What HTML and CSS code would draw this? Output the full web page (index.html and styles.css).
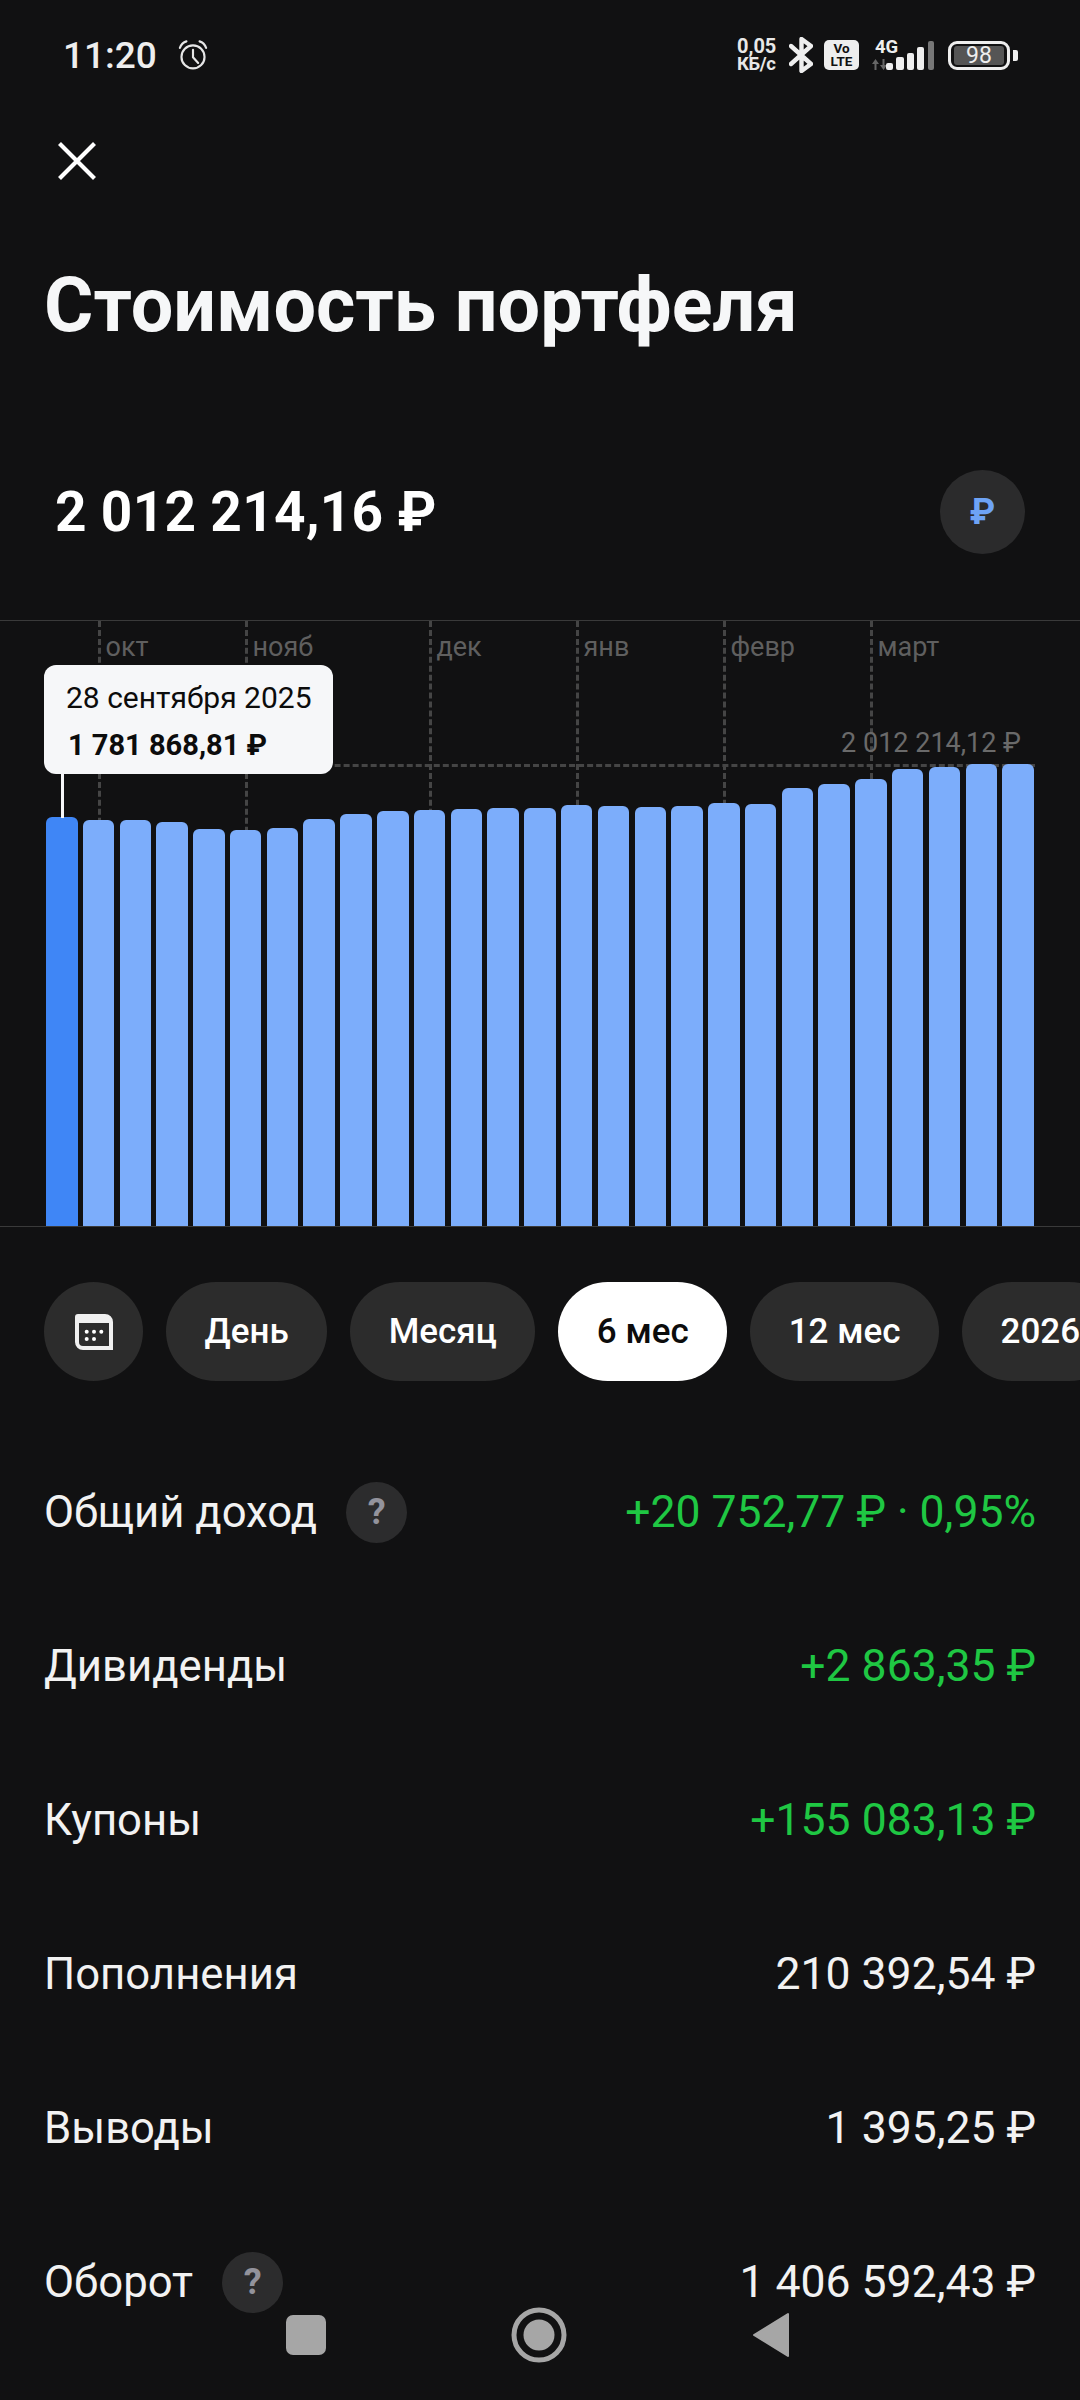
FILE: index.html
```html
<!DOCTYPE html>
<html lang="ru">
<head>
<meta charset="utf-8">
<title>Стоимость портфеля</title>
<link rel="stylesheet" href="styles.css">
</head>
<body>
<div class="page">
  <header class="status">
    <div class="status-left">
      <span class="time">11:20</span>
      <svg class="alarm" viewBox="0 0 32 32" fill="none" stroke="#e6e6e6" stroke-width="2.3" stroke-linecap="round" stroke-linejoin="round"><circle cx="16" cy="18" r="12.3"/><path d="M16 10.5v8l5.5 6M2 8.5Q4 3 9 1.5M30 8.5Q28 3 23 1.5"/></svg>
    </div>
    <div class="status-right">
      <div class="speed"><span>0,05</span><span class="speed-unit">КБ/с</span></div>
      <svg class="bt" viewBox="0 0 24 36" fill="none" stroke="#eee" stroke-width="4.4" stroke-linejoin="round" stroke-linecap="round"><path d="M2 9l20 18-9.5 7V2L22 9 2 27"/></svg>
      <div class="volte"><span>Vo</span><span>LTE</span></div>
      <div class="net">
        <span class="net-g">4G</span>
        <svg class="net-arrows" viewBox="0 0 15 11" fill="#666"><path d="M0 5l3.5-5L7 5H4.5v6h-2V5zM8 6h2.5V0h2v6H15l-3.500 5z"/></svg>
      </div>
      <svg class="signal" viewBox="0 0 48 29" fill="#eee"><rect x="0" y="22" width="7" height="7" rx="2"/><rect x="10" y="16" width="8" height="13" rx="2"/><rect x="21" y="12" width="7" height="17" rx="2"/><rect x="31" y="6" width="7" height="23" rx="2"/><rect x="42" y="0" width="6" height="29" rx="2" fill="#777"/></svg>
      <div class="battery"><div class="battery-body"><span>98</span></div><div class="battery-nub"></div></div>
    </div>
  </header>

  <button class="close" aria-label="Закрыть">
    <svg viewBox="0 0 38 38" stroke="#fff" stroke-width="4.2"><path d="M1.500 1.500l35 35M36.500 1.500l-35 35"/></svg>
  </button>

  <h1 class="title">Стоимость портфеля</h1>

  <section class="total">
    <span class="total-value">2 012 214,16 ₽</span>
    <span class="currency">₽</span>
  </section>

  <section class="chart">
    <div class="grid-v" style="left:99px"><span>окт</span></div>
    <div class="grid-v" style="left:246px"><span>нояб</span></div>
    <div class="grid-v" style="left:430px"><span>дек</span></div>
    <div class="grid-v" style="left:577px"><span>янв</span></div>
    <div class="grid-v" style="left:724px"><span>февр</span></div>
    <div class="grid-v" style="left:871px"><span>март</span></div>
    <div class="grid-h"></div>
    <div class="max-label">2 012 214,12 ₽</div>
    <div class="bars">
      <div class="bar bar-active" style="height:409px"></div>
      <div class="bar" style="height:406px"></div>
      <div class="bar" style="height:406px"></div>
      <div class="bar" style="height:404px"></div>
      <div class="bar" style="height:397px"></div>
      <div class="bar" style="height:396px"></div>
      <div class="bar" style="height:398px"></div>
      <div class="bar" style="height:407px"></div>
      <div class="bar" style="height:412px"></div>
      <div class="bar" style="height:415px"></div>
      <div class="bar" style="height:416px"></div>
      <div class="bar" style="height:417px"></div>
      <div class="bar" style="height:418px"></div>
      <div class="bar" style="height:418px"></div>
      <div class="bar" style="height:421px"></div>
      <div class="bar" style="height:420px"></div>
      <div class="bar" style="height:419px"></div>
      <div class="bar" style="height:420px"></div>
      <div class="bar" style="height:423px"></div>
      <div class="bar" style="height:422px"></div>
      <div class="bar" style="height:438px"></div>
      <div class="bar" style="height:442px"></div>
      <div class="bar" style="height:447px"></div>
      <div class="bar" style="height:457px"></div>
      <div class="bar" style="height:459px"></div>
      <div class="bar" style="height:462px"></div>
      <div class="bar" style="height:462px"></div>
    </div>
    <div class="tooltip">
      <div class="tooltip-date">28 сентября 2025</div>
      <div class="tooltip-value">1 781 868,81 ₽</div>
    </div>
    <div class="tooltip-stem"></div>
  </section>

  <nav class="chips">
    <div class="chip chip-icon">
      <svg viewBox="0 0 38 36"><path fill-rule="evenodd" d="M3 0h27a8 8 0 0 1 8 8v28H8a8 8 0 0 1-8-8V3a3 3 0 0 1 3-3zM4 9v19a4 4 0 0 0 4 4h26V9z" fill="#f0f0f0"/><g fill="#fff"><circle cx="11.700" cy="17.700" r="2"/><circle cx="19" cy="17.700" r="2"/><circle cx="26.300" cy="17.700" r="2"/><circle cx="11.700" cy="25" r="2"/><circle cx="19" cy="25" r="2"/></g></svg>
    </div>
    <div class="chip">День</div>
    <div class="chip">Месяц</div>
    <div class="chip chip-on">6 мес</div>
    <div class="chip">12 мес</div>
    <div class="chip">2026</div>
  </nav>

  <section class="rows">
    <div class="row"><div class="row-label">Общий доход<span class="help">?</span></div><div class="row-value up">+20 752,77 ₽ · 0,95%</div></div>
    <div class="row"><div class="row-label">Дивиденды</div><div class="row-value up">+2 863,35 ₽</div></div>
    <div class="row"><div class="row-label">Купоны</div><div class="row-value up">+155 083,13 ₽</div></div>
    <div class="row"><div class="row-label">Пополнения</div><div class="row-value">210 392,54 ₽</div></div>
    <div class="row"><div class="row-label">Выводы</div><div class="row-value">1 395,25 ₽</div></div>
    <div class="row"><div class="row-label">Оборот<span class="help">?</span></div><div class="row-value">1 406 592,43 ₽</div></div>
  </section>

  <div class="navbar">
    <div class="nav-square"></div>
    <svg class="nav-circle" viewBox="0 0 56 56"><circle cx="28" cy="28" r="25" fill="none" stroke="#a6a6a6" stroke-width="5"/><circle cx="28" cy="28" r="15.500" fill="#a6a6a6"/></svg>
    <svg class="nav-back" viewBox="0 0 38 46"><path d="M36 2v42L2 23z" fill="#a6a6a6" stroke="#a6a6a6" stroke-width="2" stroke-linejoin="round"/></svg>
  </div>
</div>
</body>
</html>
```
FILE: styles.css
```css
* { box-sizing: border-box; }
html, body { margin: 0; padding: 0; background: #111112; }
body { font-family: Roboto, "Noto Sans", sans-serif; color: #fff; }
.page { position: relative; width: 1080px; height: 2400px; overflow: hidden; background: #111112; }

.status { height: 110px; padding: 0 62px 0 63px; display: flex; justify-content: space-between; align-items: center; }
.status-left { display: flex; align-items: center; gap: 21px; }
.time { font-size: 37px; line-height: 1; font-weight: 500; color: #eee; }
.alarm { width: 30px; height: 30px; }
.status-right { display: flex; align-items: center; height: 36px; }
.speed { display: flex; flex-direction: column; width: 42px; font-size: 20px; line-height: 18px; font-weight: 700; color: #e8e8e8; white-space: nowrap; }
.speed-unit { font-size: 18.5px; letter-spacing: -.4px; }
.bt { width: 24px; height: 36px; margin-left: 10px; }
.volte { width: 35px; height: 30px; margin-left: 11px; border-radius: 5px; background: #eee; color: #111; display: flex; flex-direction: column; align-items: center; font-size: 13.5px; line-height: 13px; font-weight: 700; padding-top: 2px; }
.net { width: 28px; margin-left: 12px; display: flex; flex-direction: column; gap: 5px; }
.net-g { margin-left: 4px; font-size: 18.5px; line-height: 14px; font-weight: 700; color: #eee; }
.net-arrows { width: 15px; height: 11px; margin-left: 1px; }
.signal { width: 48px; height: 29px; margin-left: -13px; }
.battery { display: flex; align-items: center; margin-left: 14px; }
.battery-body { width: 62px; height: 29px; border: 3px solid #eee; border-radius: 9px; padding: 2px 3px; display: flex; }
.battery-body span { flex: 1; background: #555; border-radius: 3px; font-size: 23px; line-height: 19px; text-align: center; color: #eee; }
.battery-nub { width: 5px; height: 11px; margin-left: 3px; background: #eee; border-radius: 0 2px 2px 0; }

.close { display: block; width: 38px; height: 38px; margin: 32px 0 0 58px; padding: 0; border: 0; background: none; }
.close svg { display: block; width: 38px; height: 38px; }

.title { margin: 80px 0 0 44px; font-size: 75.5px; line-height: 90px; font-weight: 700; color: #f6f7f8; }

.total { margin-top: 120px; padding: 0 55px; display: flex; justify-content: space-between; align-items: center; height: 84px; }
.total-value { font-size: 55px; line-height: 60px; font-weight: 700; letter-spacing: .3px; }
.currency { width: 85px; height: 84px; border-radius: 50%; background: #2b2b2c; color: #6ea3f5; font-size: 36px; font-weight: 700; display: flex; align-items: center; justify-content: center; }

.chart { position: relative; height: 607px; margin-top: 66px; border-top: 1px solid #3a3a3a; border-bottom: 1px solid #3a3a3a; }
.grid-v { position: absolute; top: 0; bottom: 0; width: 0; margin-left: -1.5px; border-left: 3px dashed #454545; }
.grid-v span { position: absolute; left: 5px; top: 8px; font-size: 27px; line-height: 36px; color: #5f5f5f; }
.grid-h { position: absolute; left: 46px; right: 45px; top: 143px; border-top: 3px dashed #454545; }
.max-label { position: absolute; right: 59px; top: 104px; font-size: 27px; line-height: 36px; color: #6a6a6a; }
.bars { position: absolute; left: 46px; right: 46px; bottom: 0; display: flex; justify-content: space-between; align-items: flex-end; }
.bar { width: 31.5px; border-radius: 6px 6px 0 0; background: #7cadfb; }
.bar-active { background: #3f86f6; }
.tooltip { position: absolute; left: 44px; top: 44px; width: 289px; height: 109px; border-radius: 12px; background: #f6f7f9; color: #0c0c0c; padding: 14px 22px 0; }
.tooltip-date { font-size: 30px; line-height: 38px; white-space: nowrap; }
.tooltip-value { font-size: 29px; line-height: 38px; margin: 9px 0 0 2px; font-weight: 700; white-space: nowrap; }
.tooltip-stem { position: absolute; left: 61px; top: 153px; width: 3px; height: 44px; background: #f6f7f9; }

.chips { display: flex; gap: 23px; padding-left: 44px; margin-top: 55px; width: 1200px; }
.chip { height: 99px; flex: none; padding: 0 38.5px; border-radius: 50px; background: #2c2c2c; font-size: 35px; font-weight: 500; display: flex; align-items: center; }
.chip-icon { width: 99px; padding: 0; justify-content: center; }
.chip-icon svg { width: 38px; height: 36px; }
.chip-on { background: #fff; color: #0c0c0c; }

.rows { margin-top: 54px; padding: 0 44px; display: flex; flex-direction: column; }
.row { height: 154px; display: flex; justify-content: space-between; align-items: center; line-height: 56px; }
.row-label { display: flex; align-items: center; gap: 29px; font-size: 43.7px; color: #f2f2f2; }
.row-value { font-size: 44.5px; color: #f2f2f2; white-space: nowrap; }
.row-value.up { color: #1fc743; }
.help { width: 61px; height: 61px; border-radius: 50%; background: #2c2c2d; color: #93939c; font-size: 36px; font-weight: 700; display: flex; align-items: center; justify-content: center; }

.navbar { position: absolute; left: 0; right: 0; top: 2307px; height: 56px; }
.nav-square { position: absolute; left: 286px; top: 8px; width: 40px; height: 40px; border-radius: 7px; background: #a6a6a6; }
.nav-circle { position: absolute; left: 511px; top: 0; width: 56px; height: 56px; }
.nav-back { position: absolute; left: 752px; top: 5px; width: 38px; height: 46px; }
```
